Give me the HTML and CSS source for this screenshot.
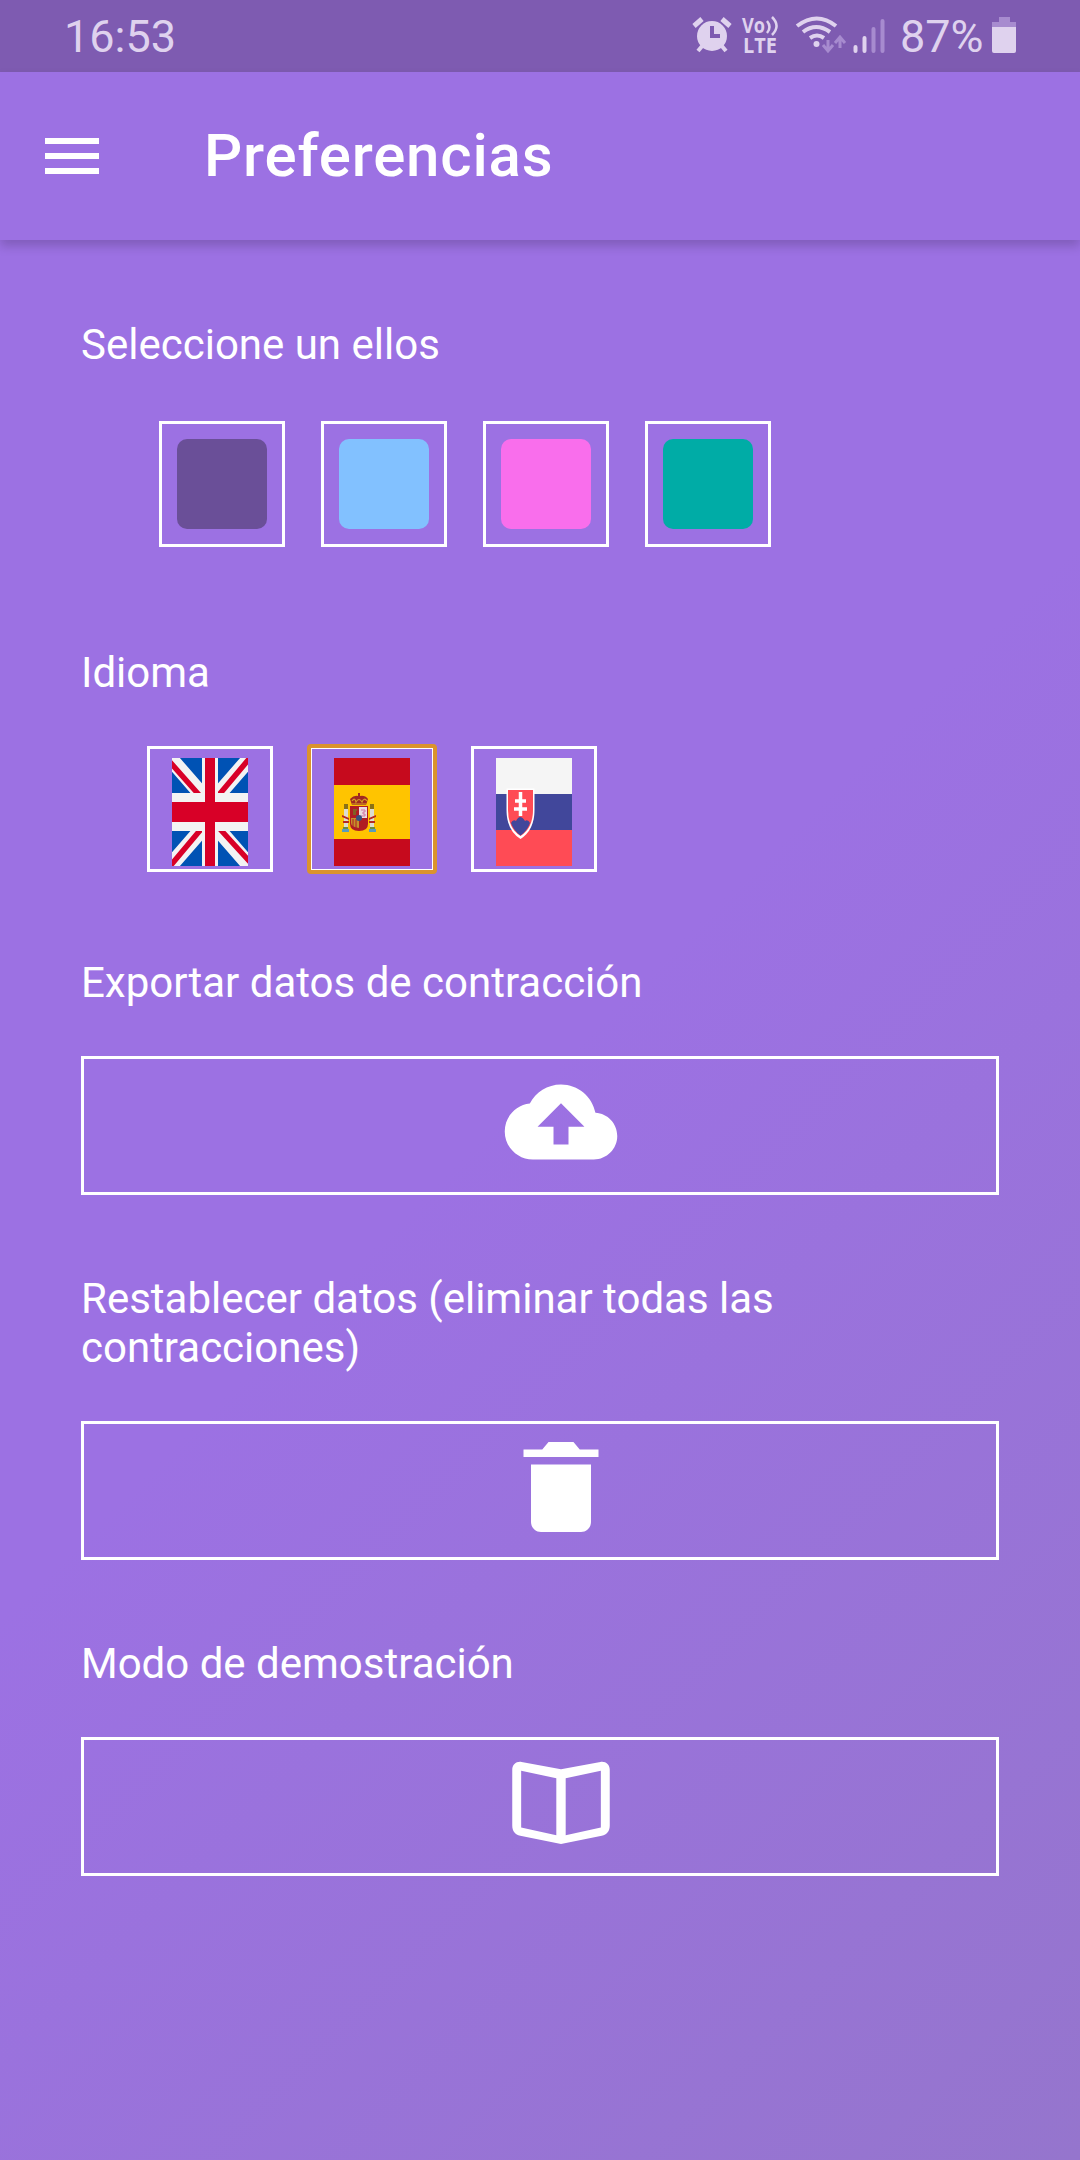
FILE: index.html
```html
<!DOCTYPE html>
<html lang="es">
<head>
    <meta charset="UTF-8">
    <meta name="viewport" content="width=device-width, initial-scale=1.0">
    <title>Preferencias</title>
    <link rel="stylesheet" href="styles.css">
</head>
<body>
    <div class="status-bar">
        <span class="time">16:53</span>
        <svg class="status-icons" viewBox="-5 0 212 72">
            <!-- alarm -->
            <g fill="#dfd2ee" stroke="#dfd2ee">
                <circle cx="19" cy="36" r="15" stroke="none"/>
                <path d="M1 26l8-7M37 26l-8-7" stroke-width="5"/>
                <path d="M5 51l5-6M33 51l-5-6" stroke-width="4"/>
                <path d="M19 26v10h8" fill="none" stroke="#7e5bb1" stroke-width="4"/>
            </g>
            <!-- VoLTE -->
            <g fill="#dfd2ee" class="volte">
                <text x="49" y="32.500" textLength="23" lengthAdjust="spacingAndGlyphs">Vo</text>
                <text x="50" y="52.500" textLength="34" lengthAdjust="spacingAndGlyphs">LTE</text>
            </g>
            <g fill="none" stroke="#dfd2ee" stroke-width="2.500">
                <path d="M74 21q5 6 0 12M79 17q9 9 0 18"/>
            </g>
            <!-- wifi -->
            <g fill="none" stroke="#dfd2ee" stroke-width="4">
                <path d="M104 26q20-15 39 0M110 32q13-10 27 0M117 38q7-5 14 0"/>
                <circle cx="123.500" cy="44" r="3" fill="#dfd2ee" stroke="none"/>
            </g>
            <path d="M135 40v10m-5-5l5 6 5-6M147 48v-10m-5 5l5-6 5 6" fill="none" stroke="#a78bcf" stroke-width="3"/>
            <!-- signal -->
            <g stroke-width="4" stroke-linecap="round">
                <path d="M162.500 47v4M171.500 38v13" stroke="#dfd2ee"/>
                <path d="M180.500 29v22M189.500 21v30" stroke="#a78bcf"/>
            </g>
        </svg>
        <span class="percent">87%</span>
        <svg class="battery" viewBox="0 0 24 36">
            <path d="M7 0h11v5h6v6H0V5h7z" fill="#a78bcf"/>
            <path d="M0 10h24v24q0 2-2 2H2q-2 0-2-2z" fill="#dfd2ee"/>
        </svg>
    </div>

    <header class="app-bar">
        <svg class="menu" viewBox="0 0 54 36"><path d="M0 0h54v6H0zM0 15h54v6H0zM0 30h54v6H0z" fill="#fff"/></svg>
        <h1>Preferencias</h1>
    </header>

    <main>
        <section class="theme">
            <h2>Seleccione un ellos</h2>
            <div class="options colors">
                <button class="option"><span class="swatch purple"></span></button>
                <button class="option"><span class="swatch blue"></span></button>
                <button class="option"><span class="swatch pink"></span></button>
                <button class="option"><span class="swatch teal"></span></button>
            </div>
        </section>

        <section class="language">
            <h2>Idioma</h2>
            <div class="options">
                <button class="option">
                    <svg class="flag" viewBox="0 0 76 108">
                        <path d="M0 0h76v108H0z" fill="#0052b4"/>
                        <path d="M-2 0L31 38M78 0L45 38M-2 108L31 70M78 108L45 70" stroke="#f3f3f3" stroke-width="15"/>
                        <path d="M-3 3L28 38M77 1L46 38M-1 107L30 70M79 105L47 70" stroke="#d80027" stroke-width="5.500"/>
                        <path d="M30 0h16v35h30v38H46v35H30V73H0V35h30z" fill="#f3f3f3"/>
                        <path d="M33 0h10v44h33v20H43v44H33V64H0V44h33z" fill="#d80027"/>
                    </svg>
                </button>
                <button class="option selected">
                    <svg class="flag" viewBox="0 0 76 108">
                        <path d="M0 0h76v108H0z" fill="#c60a1d"/>
                        <path d="M0 27h76v54H0z" fill="#ffc400"/>
                        <!-- pillars -->
                        <path d="M10 49h4v22h-4zM36 49h4v22h-4z" fill="#dddcd0"/>
                        <path d="M10 46h4v5h-4zM36 46h4v5h-4z" fill="#8b7116"/>
                        <path d="M8 57l7 3v2l-7-3zM42 57l-7 3v2l7-3zM9 63h6v2H9zM35 63h6v2h-6z" fill="#b52a23"/>
                        <path d="M8 71h7v3H8zM35 71h7v3h-7z" fill="#5a9cba"/>
                        <path d="M9 69h5v2H9zM36 69h5v2h-5z" fill="#6c8d3d"/>
                        <!-- shield and crown -->
                        <path d="M16 48h18v18q0 7-9 7t-9-7z" fill="#b01c23"/>
                        <path d="M25 49h8v11h-8z" fill="#eadce0"/>
                        <path d="M27 52h4v2h-2v2h2v2h-4" fill="none" stroke="#d274a2"/>
                        <path d="M17 60h8v10q-8-1-8-5z" fill="#c5912b"/>
                        <path d="M19 61v8M22 61v10M28 63v6M31 63v4" stroke="#b01c23"/>
                        <path d="M19 51h4v2h-1v4h-3z" fill="#805f24"/>
                        <circle cx="25" cy="60" r="3" fill="#36517f"/>
                        <path d="M18 47l-2-6q4-4 8-3v-3h2v3q5-1 8 3l-2 6z" fill="#a02921"/>
                        <path d="M18 43q3-4 4 1 3-5 6 0 2-5 5-1M18 46h14" fill="none" stroke="#d6a424" stroke-width="1.200"/>
                    </svg>
                </button>
                <button class="option">
                    <svg class="flag" viewBox="0 0 76 108">
                        <path d="M0 0h76v36H0z" fill="#f5f5f5"/>
                        <path d="M0 36h76v36H0z" fill="#41479b"/>
                        <path d="M0 72h76v36H0z" fill="#ff4b55"/>
                        <path d="M10.500 30.500h28V52q0 20-14 29-14-9-14-29z" fill="#fff"/>
                        <path d="M12 32h25v20q0 18-12.500 26Q12 70 12 52z" fill="#ff4b55"/>
                        <path d="M15 65q2-4 5-2 4-8 9 0 3-2 5 2-3 8-9.500 12.500Q18 73 15 65z" fill="#41479b"/>
                        <path d="M24.500 34v24M19 43h11M18 51h13" stroke="#fff" stroke-width="3.500"/>
                    </svg>
                </button>
            </div>
        </section>

        <section>
            <h2>Exportar datos de contracción</h2>
            <button class="action">
                <svg class="icon" viewBox="0 0 512 512"><path d="M403.002 217.001C388.998 148.002 328.998 96 256 96c-57.998 0-107.998 32.998-132.998 81.001C63.002 183.002 16 233.998 16 296c0 65.996 53.999 120 120 120h260c55 0 100-45 100-100 0-52.998-40.996-96.001-92.998-98.999zM288 276v76h-64v-76h-68l100-100 100 100h-68z"/></svg>
            </button>
        </section>

        <section>
            <h2>Restablecer datos (eliminar todas las contracciones)</h2>
            <button class="action">
                <svg class="icon" viewBox="0 0 512 512"><path d="M128 405.429C128 428.846 147.198 448 170.667 448h170.667C364.802 448 384 428.846 384 405.429V160H128v245.429zM416 96h-80l-26.785-32H202.786L176 96H96v32h320V96z"/></svg>
            </button>
        </section>

        <section>
            <h2>Modo de demostración</h2>
            <button class="action">
                <svg class="icon" viewBox="0 0 512 512"><path fill-rule="evenodd" d="M256 112L88 81C66 77 48 92 48 114V352C48 376 60 391 82 396L256 431 430 396C452 391 464 376 464 352V114C464 92 446 77 424 81ZM86 118L236 150V394L86 361ZM426 118L276 150V394L426 361Z"/></svg>
            </button>
        </section>
    </main>
</body>
</html>
```
FILE: styles.css
```css
* {
    box-sizing: border-box;
}
body {
    margin: 0;
    min-height: 2160px;
    font-family: Roboto, sans-serif;
    color: #fff;
    background: linear-gradient(135deg, #9c71e3 0%, #9c71e3 50%, #9575cd 100%);
}
.status-bar {
    display: flex;
    align-items: center;
    height: 72px;
    padding: 0 64px;
    background-color: #7e5bb1;
    color: #dfd2ee;
    font-size: 45px;
}
.time {
    flex: 1;
}
.status-icons {
    width: 212px;
    height: 72px;
}
.volte {
    font-family: "Open Sans", sans-serif;
    font-weight: bold;
    font-size: 21px;
}
.percent {
    width: 92px;
}
.battery {
    width: 24px;
    height: 36px;
    margin-top: -2px;
}
.app-bar {
    display: flex;
    align-items: center;
    gap: 105px;
    height: 168px;
    padding: 0 45px;
    background-color: #9c71e3;
    box-shadow: 0 6px 10px rgba(0, 0, 0, 0.18);
}
.menu {
    width: 54px;
    height: 36px;
}
h1 {
    margin: 0 0 2px;
    font-size: 60px;
    font-weight: 500;
    letter-spacing: 0.8px;
}
main {
    padding: 80px 81px 0;
}
section {
    margin-bottom: 79px;
}
h2 {
    margin: 0 0 49px;
    font-size: 42px;
    font-weight: 400;
    line-height: 49px;
}
button {
    display: flex;
    border: 3px solid #fff;
    padding: 0;
    background: none;
}
.options {
    display: flex;
    gap: 36px;
    padding-left: 66px;
}
.colors {
    padding-left: 78px;
}
.option {
    justify-content: center;
    width: 126px;
    height: 126px;
    padding-top: 9px;
}
.colors .option {
    padding-top: 15px;
}
.theme {
    margin-bottom: 101px;
}
.theme h2 {
    margin-bottom: 52px;
}
.language {
    margin-bottom: 86px;
}
.selected {
    outline: 4px solid #db932d;
    outline-offset: -2px;
    border-radius: 2px;
}
.swatch {
    width: 90px;
    height: 90px;
    border-radius: 10px;
}
.purple {
    background-color: #6a4f98;
}
.blue {
    background-color: #82c1ff;
}
.pink {
    background-color: #f96eec;
}
.teal {
    background-color: #00aca6;
}
.flag {
    width: 76px;
    height: 108px;
}
.action {
    justify-content: center;
    width: 100%;
    height: 139px;
    padding: 3px 0 0 42px;
}
.icon {
    width: 120px;
    height: 120px;
    fill: #fff;
}
```
